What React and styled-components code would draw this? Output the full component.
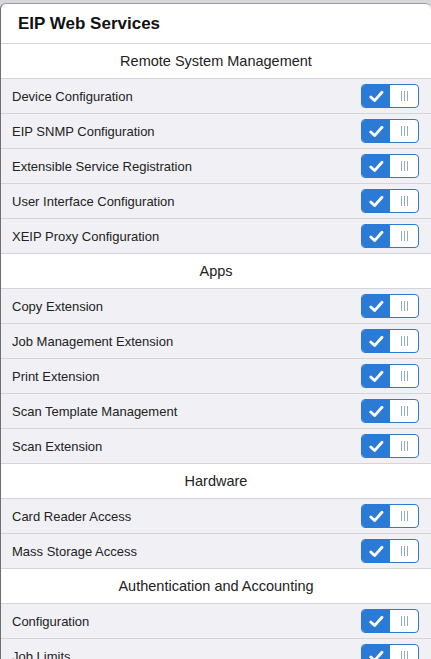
import styled, { createGlobalStyle } from "styled-components"

const GlobalStyle = createGlobalStyle`
  html, body {
    margin: 0;
    padding: 0;
    background: #d6d6db;
    font-family: "Liberation Sans", Arial, sans-serif;
  }
`

const Backdrop = styled.div`
  padding-top: 3px;
  height: 656px;
  overflow: hidden;
`

const Modal = styled.div`
  background: #fff;
  border-left: 1px solid #6e6e72;
  border-top: 1px solid #9a9aa0;
  border-top-left-radius: 6px;
  border-top-right-radius: 6px;
  overflow: hidden;
`

const Title = styled.h1`
  margin: 0;
  height: 39px;
  padding-left: 17px;
  display: flex;
  align-items: center;
  font-size: 17px;
  font-weight: 700;
  color: #111;
  border-bottom: 1px solid #d4d4d9;
`

const SectionHeader = styled.div`
  height: 34px;
  display: flex;
  align-items: center;
  justify-content: center;
  font-size: 14.5px;
  color: #222;
  background: #fff;
  border-bottom: 1px solid #d4d4d9;
`

const Row = styled.div`
  height: 34px;
  display: flex;
  align-items: center;
  justify-content: space-between;
  padding: 0 12px 0 11px;
  background: #f1f1f5;
  border-bottom: 1px solid #d4d4d9;
  font-size: 13px;
  color: #222;
`

const Toggle = styled.div`
  width: 56px;
  height: 22px;
  display: flex;
  border: 1px solid #2b7ad6;
  border-radius: 4px;
  overflow: hidden;
  background: #fff;
`

const ToggleOn = styled.div`
  width: 28px;
  background: #2b7ad6;
  display: flex;
  align-items: center;
  justify-content: center;
`

const ToggleOff = styled.div`
  flex: 1;
  display: flex;
  align-items: center;
  justify-content: center;
  gap: 2px;
`

const Bar = styled.span`
  width: 1px;
  height: 10px;
  background: #93abc9;
`

function Switch() {
  return (
    <Toggle>
      <ToggleOn>
        <svg width="15" height="13" viewBox="0 0 15 13">
          <path
            d="M1.8 7 L5.6 10.6 L13 2.2"
            fill="none"
            stroke="#fff"
            strokeWidth="2.8"
            strokeLinecap="round"
            strokeLinejoin="round"
          />
        </svg>
      </ToggleOn>
      <ToggleOff>
        <Bar />
        <Bar />
        <Bar />
      </ToggleOff>
    </Toggle>
  )
}

const sections = [
  {
    title: "Remote System Management",
    items: [
      "Device Configuration",
      "EIP SNMP Configuration",
      "Extensible Service Registration",
      "User Interface Configuration",
      "XEIP Proxy Configuration",
    ],
  },
  {
    title: "Apps",
    items: [
      "Copy Extension",
      "Job Management Extension",
      "Print Extension",
      "Scan Template Management",
      "Scan Extension",
    ],
  },
  {
    title: "Hardware",
    items: ["Card Reader Access", "Mass Storage Access"],
  },
  {
    title: "Authentication and Accounting",
    items: ["Configuration", "Job Limits"],
  },
]

export default function App() {
  return (
    <>
      <GlobalStyle />
      <Backdrop>
        <Modal>
          <Title>EIP Web Services</Title>
          {sections.map((s) => (
            <div key={s.title}>
              <SectionHeader>{s.title}</SectionHeader>
              {s.items.map((item) => (
                <Row key={item}>
                  <span>{item}</span>
                  <Switch />
                </Row>
              ))}
            </div>
          ))}
        </Modal>
      </Backdrop>
    </>
  )
}
